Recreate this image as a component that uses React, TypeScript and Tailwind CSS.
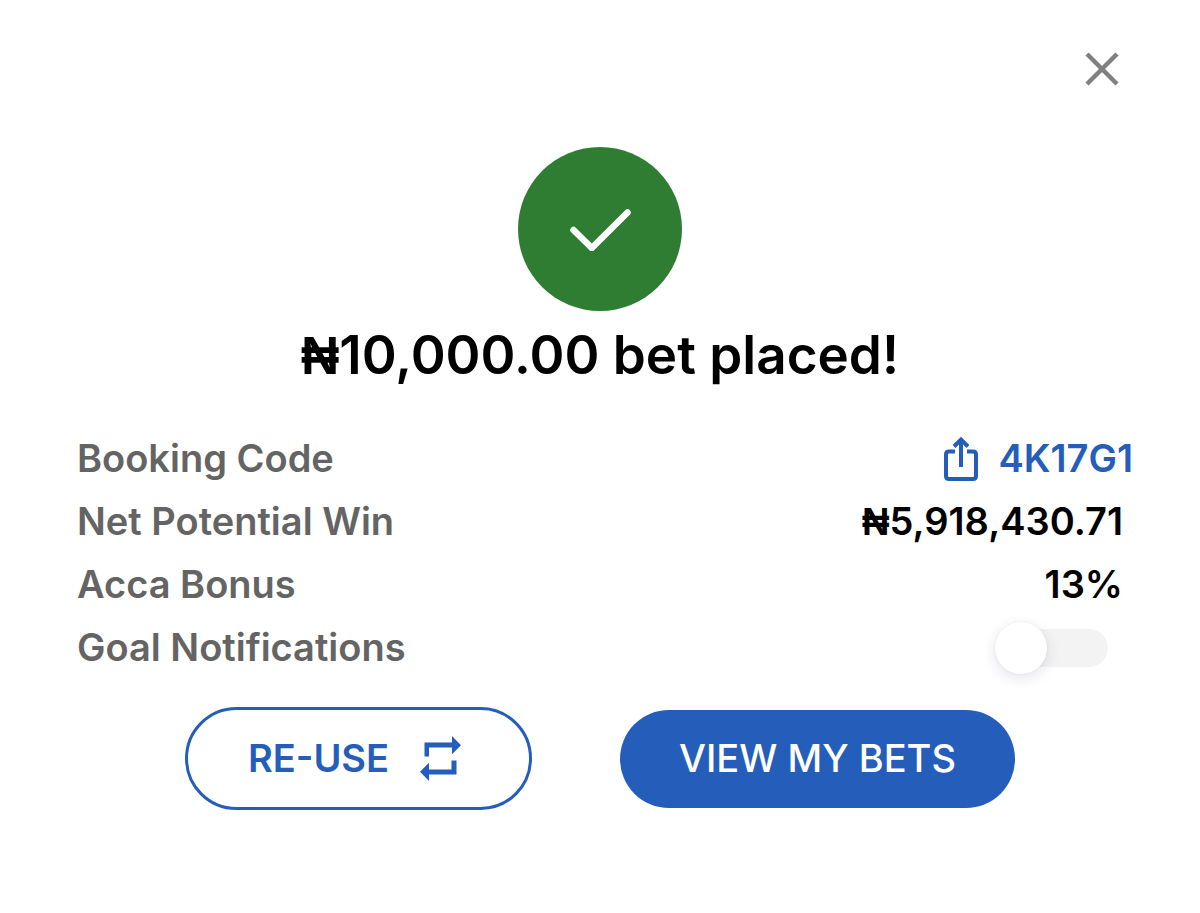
import { useState } from "react";
import type { ReactNode } from "react";

function CloseIcon() {
  return (
    <svg viewBox="0 0 34 34" className="h-[34px] w-[34px]" fill="none" stroke="#808080" strokeWidth="4.5" aria-hidden="true">
      <path d="M2 2 32 32M32 2 2 32" />
    </svg>
  );
}

function CheckIcon() {
  return (
    <svg viewBox="0 0 62 44" className="h-[44px] w-[62px]" fill="none" stroke="#fff" strokeWidth="6.500" strokeLinecap="round" strokeLinejoin="round" aria-hidden="true">
      <path d="M4.500 23 22.800 41 58.500 5.500" />
    </svg>
  );
}

function ShareIcon() {
  return (
    <svg viewBox="0 0 34 46" className="h-[46px] w-[34px]" fill="none" stroke="currentColor" strokeWidth="4" aria-hidden="true">
      <path d="M11 15.500H5Q2 15.500 2 18.500V40Q2 43 5 43H29Q32 43 32 40V18.500Q32 15.500 29 15.500H23" />
      <path d="M17 31V4M10 10.500 17 3.500 24 10.500" />
    </svg>
  );
}

function RepeatIcon() {
  return (
    <svg viewBox="0 0 41 45" className="h-[45px] w-[41px]" fill="currentColor" aria-hidden="true">
      <path d="M4.500 20.500V6.500H32V0L41 9.200 32 18.300V11.500H9V20.500Z" />
      <path d="M36.500 24.500V38.500H9V45L0 35.800 9 26.700V33.500H31.500V24.500Z" />
    </svg>
  );
}

function Amount({ value }: { value: string }) {
  return (
    <span>
      <span className="font-['Liberation_Sans','Inter',sans-serif] leading-none">₦</span>
      {value}
    </span>
  );
}

function Row({ label, children }: { label: ReactNode; children: ReactNode }) {
  return (
    <div className="flex h-[63px] items-center justify-between">
      <dt className="text-[#646464]">{label}</dt>
      <dd className="flex items-center pr-[10px] text-black">{children}</dd>
    </div>
  );
}

export default function App() {
  const [notify, setNotify] = useState(false);

  return (
    <main className="flex min-h-screen flex-col bg-white pt-[52px] pr-[67px] pb-24 pl-[77px] font-['Inter','Liberation_Sans',sans-serif] text-[38px] font-semibold">
      <div className="flex justify-end pr-[14px]">
        <button type="button" aria-label="Close">
          <CloseIcon />
        </button>
      </div>

      <section className="mt-[61px] flex flex-col items-center pr-[10px]">
        <div className="flex h-[164px] w-[164px] items-center justify-center rounded-full bg-[#2e7d32]">
          <CheckIcon />
        </div>
        <h1 className="mt-3 text-center text-[53px] leading-[64px] font-semibold text-black">
          <Amount value="10,000.00" /> bet placed!
        </h1>
      </section>

      <dl className="mt-10">
        <div className="flex h-[63px] items-center justify-between">
          <dt className="text-[#646464]">Booking Code</dt>
          <dd>
            <button type="button" className="flex items-center gap-5 text-[#255dbb]">
              <ShareIcon />
              4K17G1
            </button>
          </dd>
        </div>
        <Row label="Net Potential Win">
          <Amount value="5,918,430.71" />
        </Row>
        <Row label="Acca Bonus">13%</Row>
        <Row label={<label htmlFor="goal-notifications">Goal Notifications</label>}>
          <input
            id="goal-notifications"
            type="checkbox"
            role="switch"
            checked={notify}
            onChange={(event) => setNotify(event.target.checked)}
            className="mr-[15px] flex h-[38px] w-[113px] cursor-pointer appearance-none items-center rounded-full bg-[#f3f3f3] before:h-[52px] before:w-[52px] before:shrink-0 before:rounded-full before:bg-white before:shadow-[0_4px_14px_rgba(40,40,110,0.13),0_0_3px_rgba(0,0,0,0.06)] checked:justify-end checked:bg-[#255dbb]"
          />
        </Row>
      </dl>

      <div className="mt-7 flex items-center justify-center gap-[88px] pr-[10px]">
        <button type="button" className="flex h-[103px] w-[347px] items-center justify-center gap-[31px] rounded-full border-3 border-[#255dbb] pr-2 text-[#255dbb]">
          RE-USE
          <RepeatIcon />
        </button>
        <button type="button" className="h-[98px] w-[395px] rounded-full bg-[#255dbb] font-medium text-white">
          VIEW MY BETS
        </button>
      </div>
    </main>
  );
}
